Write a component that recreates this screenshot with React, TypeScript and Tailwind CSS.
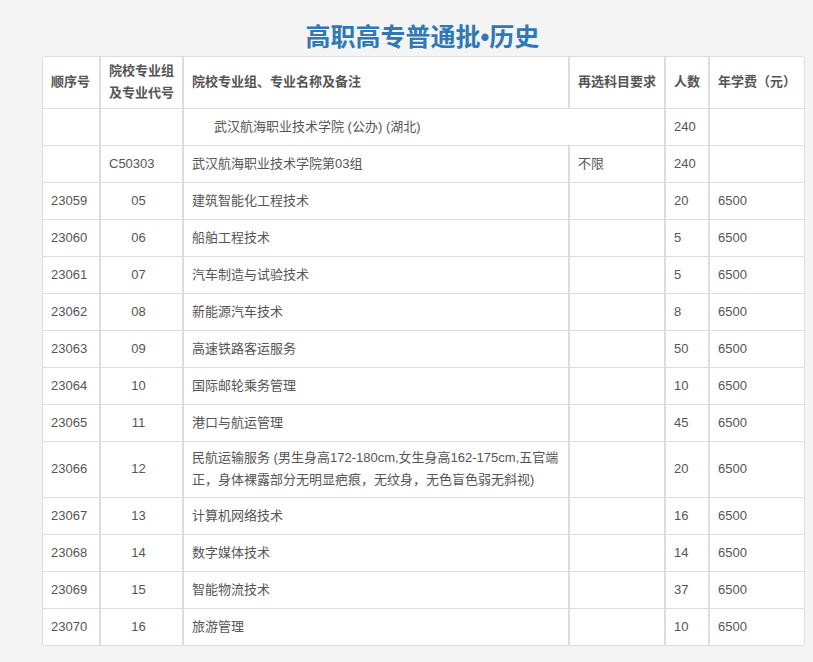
const rows: [string,string,string,string,string,string][] = [
["23059","05","建筑智能化工程技术","","20","6500"],
["23060","06","船舶工程技术","","5","6500"],
["23061","07","汽车制造与试验技术","","5","6500"],
["23062","08","新能源汽车技术","","8","6500"],
["23063","09","高速铁路客运服务","","50","6500"],
["23064","10","国际邮轮乘务管理","","10","6500"],
["23065","11","港口与航运管理","","45","6500"],
["23066","12","民航运输服务 (男生身高172-180cm,女生身高162-175cm,五官端正，身体裸露部分无明显疤痕，无纹身，无色盲色弱无斜视)","","20","6500"],
["23067","13","计算机网络技术","","16","6500"],
["23068","14","数字媒体技术","","14","6500"],
["23069","15","智能物流技术","","37","6500"],
["23070","16","旅游管理","","10","6500"],
];
const td = "border-t border-[#dddddd] border-l-2 first:border-l-0 px-[8px] align-middle";
export default function App() {
  return (
    <div className="min-h-[662px] bg-[#f4f4f4] pt-[18px] text-[13px] text-[#555]" style={{fontFamily:'"Liberation Sans","Noto Sans CJK SC",sans-serif'}}>
      <h1 className="text-center text-[25px] font-bold text-[#2f79b4] leading-[38px] ml-[32px]">高职高专普通批•历史</h1>
      <div className="ml-[42px] w-[763px] bg-white border border-[#dddddd] rounded-[3px] overflow-hidden">
        <table className="w-full border-collapse table-fixed">
          <colgroup><col className="w-[57px]"/><col className="w-[83px]"/><col className="w-[386px]"/><col className="w-[96px]"/><col className="w-[44px]"/><col/></colgroup>
          <thead><tr className="h-[51px] font-bold leading-[22px]">
            <th className="px-[8px] text-left border-l-0">顺序号</th>
            <th className="px-[8px] text-left border-l-2 border-[#dddddd]">院校专业组及专业代号</th>
            <th className="px-[8px] text-left border-l-2 border-[#dddddd]">院校专业组、专业名称及备注</th>
            <th className="px-[8px] text-left border-l-2 border-[#dddddd]">再选科目要求</th>
            <th className="px-[8px] text-left border-l-2 border-[#dddddd]">人数</th>
            <th className="px-[8px] text-left border-l-2 border-[#dddddd]">年学费（元）</th>
          </tr></thead>
          <tbody>
            <tr className="h-[37px]"><td className={td}></td><td className={td}></td><td className={td+" pl-[30px]"} colSpan={2}>武汉航海职业技术学院 (公办) (湖北)</td><td className={td}>240</td><td className={td}></td></tr>
            <tr className="h-[37px]"><td className={td}></td><td className={td}>C50303</td><td className={td}>武汉航海职业技术学院第03组</td><td className={td}>不限</td><td className={td}>240</td><td className={td}></td></tr>
            {rows.map(r=>(
              <tr key={r[0]} className={r[2].length>20?"h-[56px] leading-[22px]":"h-[37px]"}>
                <td className={td}>{r[0]}</td><td className={td+" text-center pr-[14px]"}>{r[1]}</td><td className={td}>{r[2]}</td><td className={td}>{r[3]}</td><td className={td}>{r[4]}</td><td className={td}>{r[5]}</td>
              </tr>
            ))}
          </tbody>
        </table>
      </div>
    </div>
  );
}
